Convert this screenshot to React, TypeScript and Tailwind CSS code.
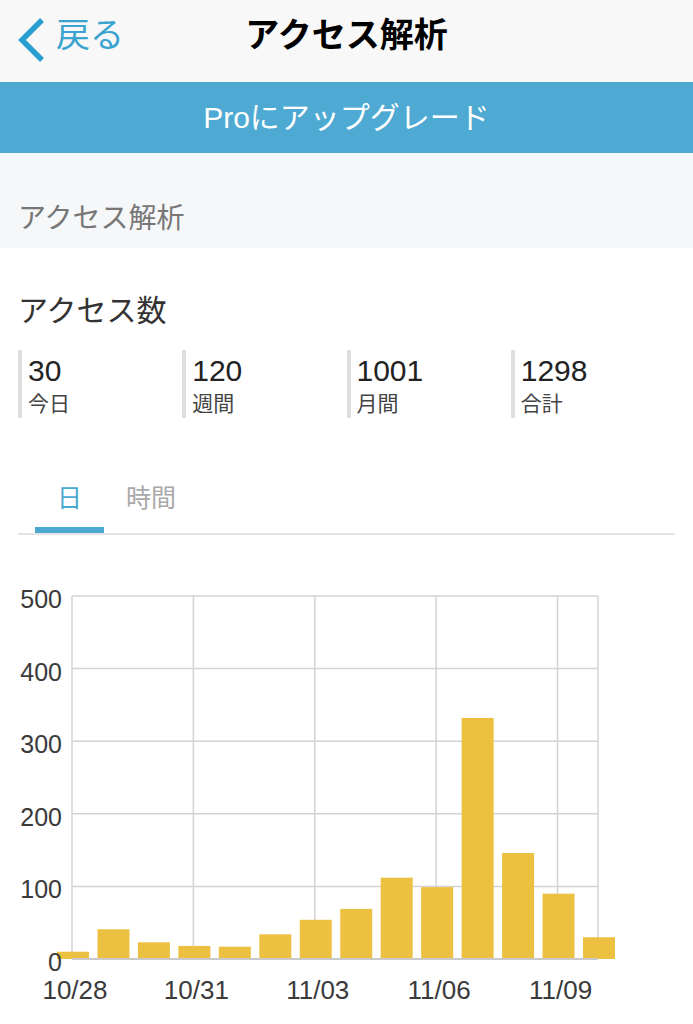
import React from 'react';

const FONT = '"Liberation Sans", "Noto Sans CJK JP", sans-serif';

const STATS = [
  { value: '30', label: '今日' },
  { value: '120', label: '週間' },
  { value: '1001', label: '月間' },
  { value: '1298', label: '合計' },
];

const DAYS = [10, 41, 23, 18, 17, 34, 54, 69, 112, 99, 332, 146, 90, 30];
const X_TICKS = [
  { i: 0, label: '10/28' },
  { i: 3, label: '10/31' },
  { i: 6, label: '11/03' },
  { i: 9, label: '11/06' },
  { i: 12, label: '11/09' },
];

const LEFT = 72;
const RIGHT = 598;
const TOP = 596;
const BASE = 959;
const STEP = (RIGHT - LEFT) / 13;
const yOf = (v: number) => BASE - (v / 500) * (BASE - TOP);

function Chart() {
  return (
    <svg width={693} height={444} viewBox="0 580 693 444" className="block">
      {[100, 200, 300, 400, 500].map((v) => (
        <line key={v} x1={LEFT} x2={RIGHT} y1={yOf(v)} y2={yOf(v)} stroke="#d3d3d3" strokeWidth={1.5} />
      ))}
      {[LEFT, ...X_TICKS.slice(1).map((t) => LEFT + t.i * STEP), RIGHT].map((x) => (
        <line key={x} x1={x} x2={x} y1={TOP} y2={BASE} stroke="#d3d3d3" strokeWidth={1.5} />
      ))}
      {DAYS.map((v, i) => {
        const cx = LEFT + i * STEP + 1;
        return <rect key={i} x={cx - 16} y={yOf(v)} width={32} height={BASE - yOf(v)} fill="#ecc141" />;
      })}
      <line x1={LEFT} x2={RIGHT} y1={BASE} y2={BASE} stroke="#c9c9c9" strokeWidth={2} />
      {[0, 100, 200, 300, 400, 500].map((v) => (
        <text key={v} x={62} y={yOf(v) + 12} textAnchor="end" fontSize={25} fill="#3a3a3a" style={{ fontFamily: FONT }}>
          {v}
        </text>
      ))}
      {X_TICKS.map((t) => (
        <text key={t.label} x={LEFT + t.i * STEP + 3} y={999} textAnchor="middle" fontSize={26} fill="#3a3a3a" style={{ fontFamily: FONT }}>
          {t.label}
        </text>
      ))}
    </svg>
  );
}

export default function App() {
  return (
    <div className="w-[693px] h-[1024px] overflow-hidden bg-white" style={{ fontFamily: FONT }}>
      <div className="h-[82px] pb-[12px] bg-[#f8f8f9] grid grid-cols-[1fr_auto_1fr] items-center">
        <div className="flex items-center">
          <svg width={50} height={60} viewBox="0 0 50 60">
            <polyline points="42,15 22,35 42,55" fill="none" stroke="#2a9fcf" strokeWidth={5.5} />
          </svg>
          <span className="ml-[6px] text-[34px] leading-none text-[#3aa3cf]">戻る</span>
        </div>
        <h1 className="text-[34px] font-bold text-black leading-none">アクセス解析</h1>
        <div />
      </div>

      <div className="h-[71px] bg-[#4eaad3] flex items-center justify-center">
        <span className="text-[30px] text-white leading-none">Proにアップグレード</span>
      </div>

      <div className="h-[95px] bg-[#f6f7f9] pt-[47px] px-[18px]">
        <div className="text-[28px] leading-[38px] text-[#777777]">アクセス解析</div>
      </div>

      <div className="mt-[43px] px-[18px] text-[30px] leading-[40px] text-[#333333]">アクセス数</div>

      <div className="mt-[19px] px-[18px] grid grid-cols-4">
        {STATS.map((s) => (
          <div key={s.label} className="h-[68px] border-l-[4px] border-[#dedede] pl-[6px] pt-[6px]">
            <div className="text-[30px] leading-[30px] text-[#222222]">{s.value}</div>
            <div className="mt-[6px] text-[21px] leading-[24px] text-[#444444]">{s.label}</div>
          </div>
        ))}
      </div>

      <div className="mt-[52px] mx-[18px]">
        <div className="flex">
          <div className="ml-[17px] w-[69px] flex flex-col">
            <div className="h-[57px] flex items-center justify-center text-[25px] text-[#4ba8d0]">日</div>
            <div className="h-[6px] bg-[#4ba8d0]" />
          </div>
          <div className="ml-[22px] h-[57px] flex items-center text-[25px] text-[#a9a9a9]">時間</div>
        </div>
        <div className="h-[2px] bg-[#e3e3e3]" />
      </div>

      <div className="mt-[45px]">
        <Chart />
      </div>
    </div>
  );
}
